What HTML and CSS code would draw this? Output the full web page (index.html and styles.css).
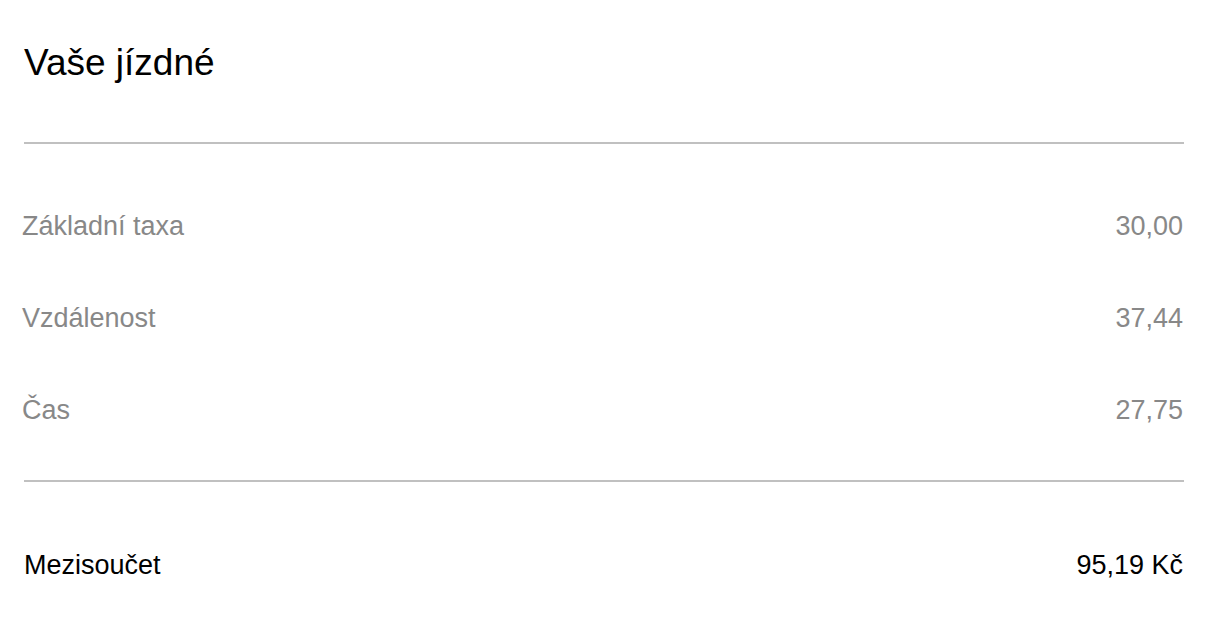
FILE: index.html
```html
<!DOCTYPE html>
<html lang="cs">
<head>
    <meta charset="UTF-8">
    <title>Vaše jízdné</title>
    <link rel="stylesheet" href="styles.css">
</head>
<body>
    <div class="fare">
        <h1 class="fare-title">Vaše jízdné</h1>
        <div class="fare-items">
            <div class="fare-row">
                <span>Základní taxa</span>
                <span>30,00</span>
            </div>
            <div class="fare-row">
                <span>Vzdálenost</span>
                <span>37,44</span>
            </div>
            <div class="fare-row">
                <span>Čas</span>
                <span>27,75</span>
            </div>
        </div>
        <div class="fare-total">
            <span>Mezisoučet</span>
            <span>95,19 Kč</span>
        </div>
    </div>
</body>
</html>
```

FILE: styles.css
```css
body {
    margin: 0;
    padding: 0;
    background-color: #fff;
    font-family: "Liberation Sans", Arial, sans-serif;
    color: #000;
}

.fare {
    width: 1160px;
    padding-left: 24px;
}

.fare-title {
    margin: 0;
    height: 144px;
    box-sizing: border-box;
    padding-top: 41px;
    font-size: 37px;
    font-weight: normal;
    line-height: 44px;
    border-bottom: 2px solid #c0c0c0;
}

.fare-items {
    padding: 36px 0 24px;
    border-bottom: 2px solid #c0c0c0;
}

.fare-row {
    display: flex;
    justify-content: space-between;
    align-items: center;
    height: 92px;
    font-size: 27px;
    color: #888;
}

.fare-row span:first-child {
    margin-left: -2px;
}

.fare-row span:last-child,
.fare-total span:last-child {
    margin-right: 1px;
}

.fare-total {
    display: flex;
    justify-content: space-between;
    align-items: center;
    height: 166px;
    font-size: 27px;
    color: #000;
}
```
